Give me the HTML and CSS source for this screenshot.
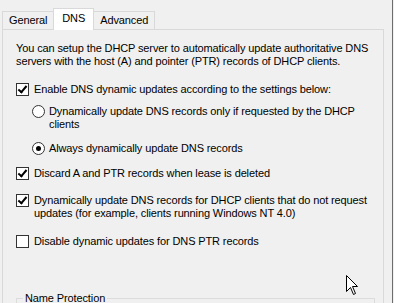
FILE: index.html
```html
<!DOCTYPE html>
<html lang="en">
<head>
    <meta charset="UTF-8">
    <title>DHCP DNS settings</title>
    <link rel="stylesheet" href="styles.css">
</head>
<body>
    <div class="window">
        <div class="sheet">
            <div class="tabs">
                <div class="tab">General</div>
                <div class="tab active">DNS</div>
                <div class="tab">Advanced</div>
            </div>
            <div class="panel">
                <p class="intro">You can setup the DHCP server to automatically update authoritative DNS<br>servers with the host (A) and pointer (PTR) records of DHCP clients.</p>

                <div class="option first">
                    <span class="check on"></span>
                    <span class="label">Enable DNS dynamic updates according to the settings below:</span>
                </div>

                <div class="option sub">
                    <span class="radio"></span>
                    <span class="label">Dynamically update DNS records only if requested by the DHCP<br>clients</span>
                </div>
                <div class="option sub second">
                    <span class="radio on"></span>
                    <span class="label">Always dynamically update DNS records</span>
                </div>

                <div class="option discard">
                    <span class="check on"></span>
                    <span class="label">Discard A and PTR records when lease is deleted</span>
                </div>

                <div class="option">
                    <span class="check on"></span>
                    <span class="label">Dynamically update DNS records for DHCP clients that do not request<br>updates (for example, clients running Windows NT 4.0)</span>
                </div>

                <div class="option">
                    <span class="check"></span>
                    <span class="label">Disable dynamic updates for DNS PTR records</span>
                </div>

                <fieldset class="group">
                    <legend>Name Protection</legend>
                </fieldset>

                <svg class="cursor" width="13" height="21" viewBox="0 0 13 21">
                    <path d="M0.5 0.5 L0.5 16.5 L4.5 12.5 L7.5 19.5 L9.5 18.5 L6.5 11.5 L11.5 11.5 Z" fill="#fff" stroke="#000" stroke-width="1"/>
                </svg>
            </div>
        </div>
        <div class="edge"></div>
    </div>
</body>
</html>
```

FILE: styles.css
```css
body {
    margin: 0;
    background: #f0f0f0;
    font-family: "Liberation Sans", Arial, sans-serif;
    font-size: 11px;
    letter-spacing: -0.12px;
    color: #000;
    overflow: hidden;
}
.window {
    display: flex;
    height: 303px;
    overflow: hidden;
}
.sheet {
    width: 382px;
    padding: 9px 0 0 2px;
}
.edge {
    width: 1px;
    margin-left: 8px;
    background: #6d6d6d;
}
.tabs {
    display: flex;
    align-items: flex-end;
    padding-left: 1px;
    height: 20px;
}
.tab {
    height: 17px;
    line-height: 17px;
    padding: 0 6px;
    border: 1px solid #d9d9d9;
    border-bottom: none;
    margin-left: -1px;
    background: #f0f0f0;
}
.tab.active {
    position: relative;
    z-index: 1;
    height: 21px;
    line-height: 19px;
    margin-bottom: -1px;
    padding: 0 8px;
    background: #fff;
}
.panel {
    position: relative;
    height: 273px;
    border: 1px solid #d9d9d9;
    border-bottom: none;
    padding: 12px 0 0 13px;
}
.intro {
    margin: 0;
    line-height: 13px;
}
.option {
    display: flex;
    align-items: flex-start;
    line-height: 13px;
    margin-top: 14px;
}
.option.first {
    margin-top: 15px;
}
.option.sub {
    margin-left: 16px;
    margin-top: 9px;
}
.option.sub.second {
    margin-top: 11px;
}
.option.discard {
    margin-top: 12px;
}
.option:last-of-type {
    margin-top: 15px;
}
.check {
    flex: none;
    width: 11px;
    height: 11px;
    border: 1px solid #333;
    background: #fff;
    margin-right: 5px;
    position: relative;
}
.check.on::after {
    content: "";
    position: absolute;
    left: 3px;
    top: 0px;
    width: 3px;
    height: 7px;
    border: solid #000;
    border-width: 0 2px 2px 0;
    transform: rotate(40deg);
}
.radio {
    flex: none;
    width: 11px;
    height: 11px;
    border: 1px solid #333;
    border-radius: 50%;
    background: #fff;
    margin-right: 4px;
    position: relative;
}
.radio.on::after {
    content: "";
    position: absolute;
    left: 3px;
    top: 3px;
    width: 5px;
    height: 5px;
    border-radius: 50%;
    background: #000;
}
.group {
    margin: 44px 8px 0 0;
    padding: 0;
    height: 10px;
    border: 1px solid #dcdcdc;
    border-bottom: none;
}
.group legend {
    padding: 0 2px;
    margin-left: 6px;
}
.cursor {
    position: absolute;
    left: 343px;
    top: 245px;
}
```
